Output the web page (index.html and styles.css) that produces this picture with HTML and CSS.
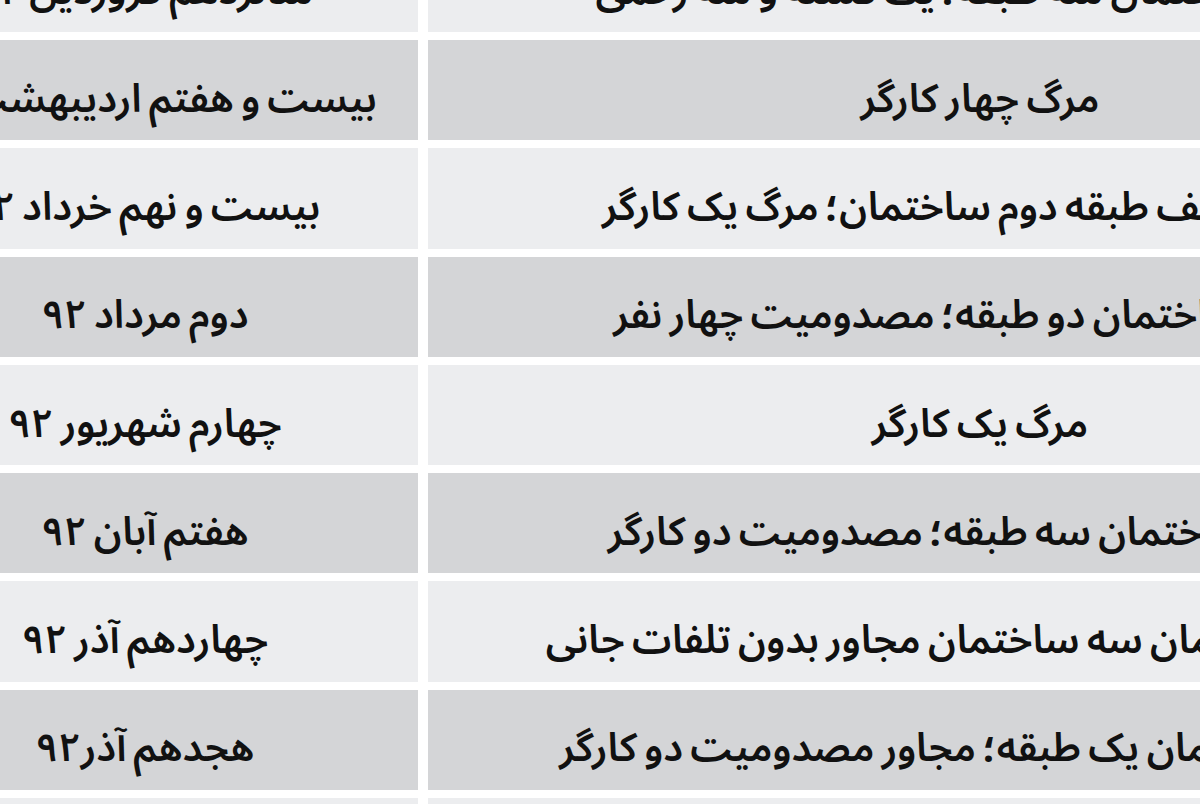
FILE: index.html
```html
<!DOCTYPE html>
<html lang="fa">
<head>
<meta charset="utf-8">
<title>جدول حوادث</title>
<link rel="stylesheet" href="styles.css">
</head>
<body>
<div class="table" dir="rtl">
  <div class="cell light event">ریزش ساختمان سه طبقه؛ یک کشته و سه زخمی</div>
  <div class="cell light date">شانزدهم فروردین ۹۲</div>

  <div class="cell gray event">مرگ چهار کارگر</div>
  <div class="cell gray date">بیست و هفتم اردیبهشت ۹۲</div>

  <div class="cell light event">ریزش سقف طبقه دوم ساختمان؛ مرگ یک کارگر</div>
  <div class="cell light date">بیست و نهم خرداد ۹۲</div>

  <div class="cell gray event">ریزش ساختمان دو طبقه؛ مصدومیت چهار نفر</div>
  <div class="cell gray date">دوم مرداد ۹۲</div>

  <div class="cell light event">مرگ یک کارگر</div>
  <div class="cell light date">چهارم شهریور ۹۲</div>

  <div class="cell gray event">ریزش ساختمان سه طبقه؛ مصدومیت دو کارگر</div>
  <div class="cell gray date">هفتم آبان ۹۲</div>

  <div class="cell light event">آسیب ساختمان سه ساختمان مجاور بدون تلفات جانی</div>
  <div class="cell light date">چهاردهم آذر ۹۲</div>

  <div class="cell gray event">ریزش ساختمان یک طبقه؛ مجاور مصدومیت دو کارگر</div>
  <div class="cell gray date">هجدهم آذر۹۲</div>

  <div class="cell light event">ریزش دیوار ساختمان</div>
  <div class="cell light date">دی ۹۲</div>
</div>
</body>
</html>
```

FILE: styles.css
```css
html, body {
  margin: 0;
  padding: 0;
  background: #ffffff;
  overflow: hidden;
}

.table {
  direction: rtl;
  display: grid;
  grid-template-columns: 1104px 546px;
  grid-auto-rows: 100.25px;
  column-gap: 10px;
  row-gap: 8px;
  width: 1660px;
  margin-left: -128px;
  margin-top: -68.25px;
  font-family: "Noto Sans Arabic", "Noto Naskh Arabic", "DejaVu Sans", sans-serif;
  font-size: 39.5px;
  font-weight: 600;
  word-spacing: -3px;
  color: #111111;
}

.cell {
  display: flex;
  align-items: center;
  justify-content: center;
  padding-top: 19px;
  box-sizing: border-box;
  white-space: nowrap;
  line-height: 1;
}

.gray {
  background: #d4d5d7;
}

.light {
  background: #ecedef;
}
```
